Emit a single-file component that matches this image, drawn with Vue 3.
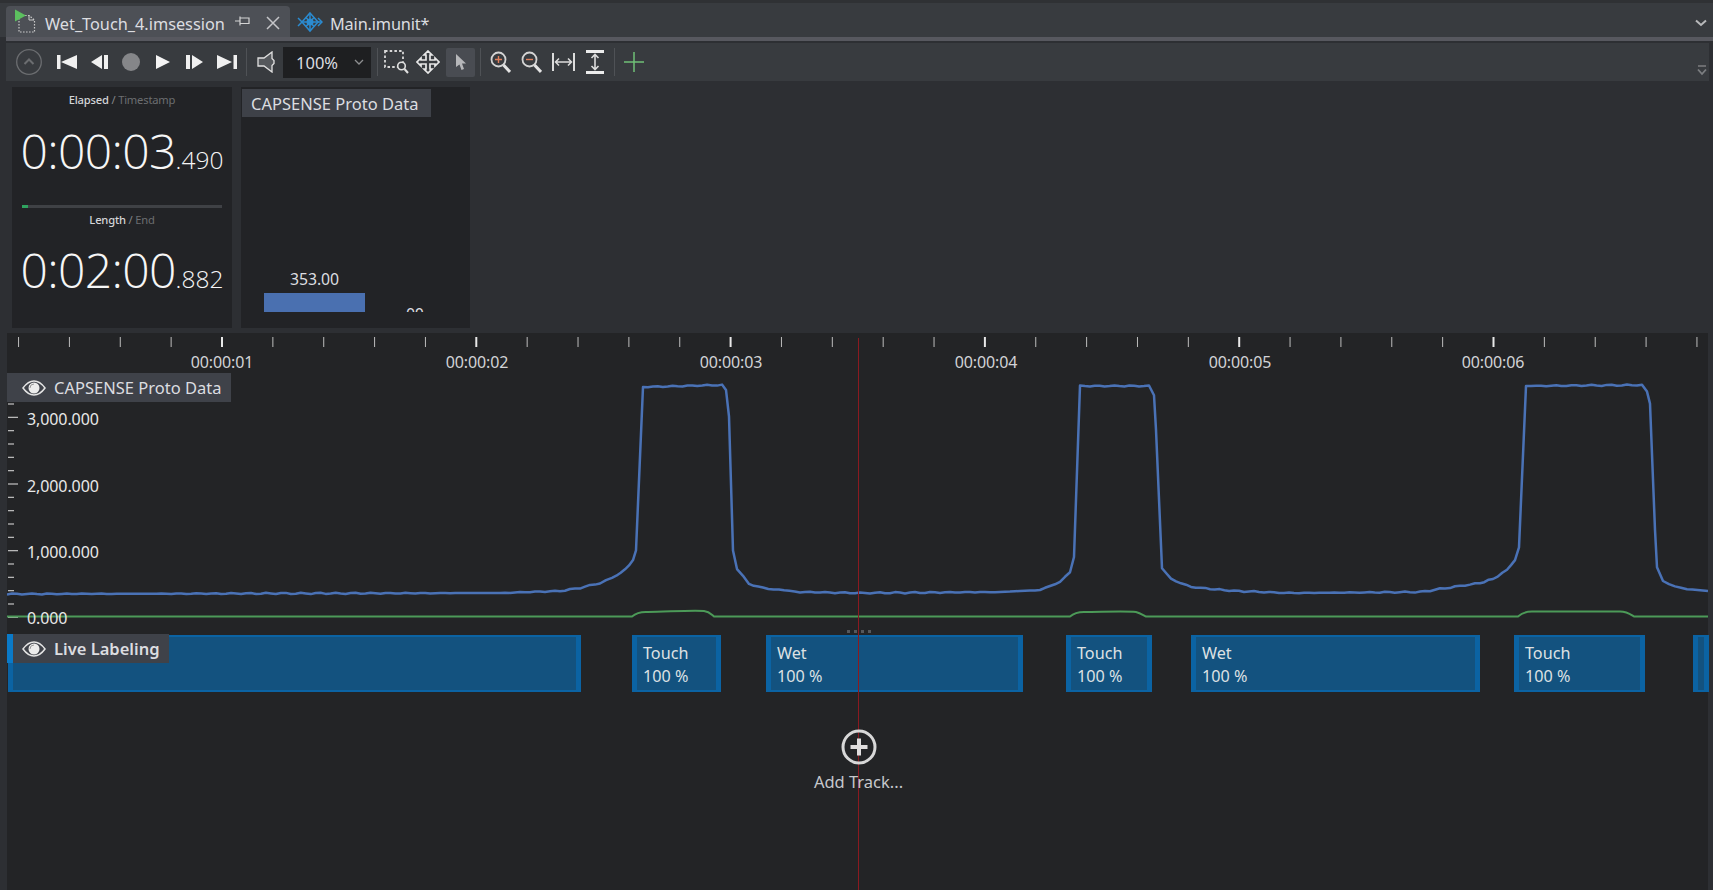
<script setup>
const ORIGIN_X = 7
const keyPoints = [
  [7, 594], [500, 593], [560, 591], [580, 588], [600, 583], [612, 578], [625, 570], [633, 560], [636, 550], [643, 387],
  [722, 385], [726, 390], [729, 417], [733, 550], [737, 569], [749, 584], [763, 588], [800, 592], [860, 593],
  [1000, 592], [1040, 590], [1060, 582], [1070, 572], [1074, 557], [1080, 386], [1149, 386], [1154, 395], [1156, 430],
  [1162, 568], [1171, 579], [1191, 587], [1234, 591], [1289, 593], [1420, 592], [1480, 583], [1493, 579], [1507, 570],
  [1515, 560], [1519, 547], [1526, 386], [1642, 385], [1647, 392], [1650, 403], [1655, 530], [1657, 567], [1663, 581],
  [1675, 587], [1687, 589], [1708, 591]
]

function jitter(x) {
  return (Math.sin(x * 0.37) + Math.sin(x * 0.91 + 1.3)) * 0.35
}

function buildBlue() {
  const pts = []
  for (let i = 0; i < keyPoints.length - 1; i++) {
    const [x0, y0] = keyPoints[i]
    const [x1, y1] = keyPoints[i + 1]
    const n = Math.max(1, Math.round((x1 - x0) / 5))
    for (let k = 0; k < n; k++) {
      const x = x0 + ((x1 - x0) * k) / n
      const y = y0 + ((y1 - y0) * k) / n
      pts.push(`${x.toFixed(1)},${(y + jitter(x)).toFixed(1)}`)
    }
  }
  pts.push('1708,591')
  return pts.join(' ')
}

const bluePoints = buildBlue()
const greenPath =
  'M7 616.5H632C636 613 640 611.5 648 612C665 612 690 610 704 611C709 611.500 711 614 714 616.500H1070C1074 613 1078 612 1084 612C1100 612 1125 611 1136 612C1140 613 1143 615 1146 616.500H1518C1522 613 1526 611.500 1532 611.500H1620C1627 611.500 1630 614 1634 616.500H1708'

const rulerTicks = Array.from({ length: 34 }, (_, k) => ({
  x: 222 + 50.86 * (k - 4),
  major: (k - 4) % 5 === 0
}))
const rulerLabels = [
  ['00:00:01', 222], ['00:00:02', 477], ['00:00:03', 731],
  ['00:00:04', 986], ['00:00:05', 1240], ['00:00:06', 1493]
]
const axisTicks = Array.from({ length: 17 }, (_, k) => ({
  y: 404 + k * 13.333,
  major: (k - 1) % 5 === 0
}))
const axisLabels = [['3,000.000', 420], ['2,000.000', 486.500], ['1,000.000', 552.500], ['0.000', 618.500]]

const blocks = [
  { x: 8, w: 573, lines: [] },
  { x: 632, w: 89, lines: ['Touch', '100 %'] },
  { x: 766, w: 257, lines: ['Wet', '100 %'] },
  { x: 1066, w: 86, lines: ['Touch', '100 %'] },
  { x: 1191, w: 289, lines: ['Wet', '100 %'] },
  { x: 1514, w: 131, lines: ['Touch', '100 %'] },
  { x: 1693, w: 15, lines: [] }
]
function blockStyle(b) {
  return { left: `${b.x - ORIGIN_X}px`, width: `${b.w}px` }
}
</script>

<template>
  <div class="app">
    <div class="tabstrip">
      <div class="tab active">
        <svg class="ico-session" viewBox="0 0 24 24" width="24" height="24">
          <path d="M6 6.500H16L21.500 11V23H6Z" fill="none" stroke="#c9c9c9" stroke-width="1.200" stroke-dasharray="1.600 1.400" />
          <path d="M16 6V11H21" fill="none" stroke="#c9c9c9" stroke-width="1" />
          <path d="M2 0.500L13 6.500L2 12.500Z" fill="#5cc05f" />
        </svg>
        <span class="tab-title">Wet_Touch_4.imsession</span>
        <svg class="ico-pin" viewBox="0 0 16 12" width="16" height="12">
          <path d="M0 6H5M5 1.500V10.500M5 3H14V8.500H5" fill="none" stroke="#d4d4d4" stroke-width="1.200" />
        </svg>
        <svg class="ico-close" viewBox="0 0 14 14" width="14" height="14">
          <path d="M1 1L13 13M13 1L1 13" stroke="#c4c5c8" stroke-width="1.500" />
        </svg>
      </div>
      <div class="tab">
        <svg class="ico-unit" viewBox="0 0 26 22" width="26" height="22">
          <g fill="none" stroke="#2b8bd0" stroke-width="1.500">
            <path d="M13 2L21 11L13 20L5 11Z" />
            <path d="M13 2V20M5 11H25M9 6.500L17 15.500M17 6.500L9 15.500" />
            <path d="M1 7L5 11L1 15" />
            <path d="M21 7L25 11L21 15" />
          </g>
          <circle cx="13" cy="11" r="3.500" fill="#2b8bd0" />
        </svg>
        <span class="tab-title">Main.imunit*</span>
      </div>
      <svg class="ico-overflow" viewBox="0 0 12 8" width="12" height="8">
        <path d="M1 1.500L6 6L11 1.500" fill="none" stroke="#b8b9bb" stroke-width="2" />
      </svg>
    </div>
    <div class="tabline"></div>

    <div class="toolbar">
      <svg class="tb t-circle" viewBox="0 0 26 26" width="26" height="26">
        <circle cx="13" cy="13" r="12.300" fill="none" stroke="#6b6d70" stroke-width="1.300" />
        <path d="M8.500 15L13 10.500L17.500 15" fill="none" stroke="#6b6d70" stroke-width="2" />
      </svg>
      <svg class="tb t-skipb" viewBox="0 0 20 16" width="20" height="16">
        <path d="M0 1H3.500V15H0ZM20 1V15L4 8Z" fill="#f0f0f0" />
      </svg>
      <svg class="tb t-stepb" viewBox="0 0 17 16" width="17" height="16">
        <path d="M11 1V15L0 8ZM13 1H17V15H13Z" fill="#f0f0f0" />
      </svg>
      <div class="t-stop"></div>
      <svg class="tb t-play" viewBox="0 0 14 16" width="14" height="16">
        <path d="M0 1L14 8L0 15Z" fill="#f4f4f4" />
      </svg>
      <svg class="tb t-stepf" viewBox="0 0 17 16" width="17" height="16">
        <path d="M0 1H4V15H0ZM6 1L17 8L6 15Z" fill="#f0f0f0" />
      </svg>
      <svg class="tb t-skipf" viewBox="0 0 20 16" width="20" height="16">
        <path d="M0 1L15 8L0 15ZM16.500 1H20V15H16.500Z" fill="#f0f0f0" />
      </svg>
      <div class="sep s1"></div>
      <svg class="tb t-speaker" viewBox="0 0 18 22" width="18" height="22">
        <path d="M1 7H7L15 1V7.500L17 9.500V12.500L15 14.500V21L7 15H1Z" fill="#55585c" stroke="#e0e0e0" stroke-width="1.300" />
      </svg>
      <div class="zoombox">
        <span>100%</span>
        <svg viewBox="0 0 10 6" width="10" height="6">
          <path d="M1 1L5 5L9 1" fill="none" stroke="#8d8e90" stroke-width="1.300" />
        </svg>
      </div>
      <div class="sep s2"></div>
      <svg class="tb t-select" viewBox="0 0 25 24" width="25" height="24">
        <rect x="1" y="1" width="18" height="16" fill="none" stroke="#d8d8d8" stroke-width="1.800" stroke-dasharray="2.500 2.200" />
        <circle cx="17.500" cy="16" r="3.800" fill="#383b3f" stroke="#e0e0e0" stroke-width="1.600" />
        <path d="M20.500 19L24 23" stroke="#e0e0e0" stroke-width="2" />
      </svg>
      <svg class="tb t-move" viewBox="0 0 24 24" width="24" height="24">
        <path d="M12 1L16 5H14V10H19V8L23 12L19 16V14H14V19H16L12 23L8 19H10V14H5V16L1 12L5 8V10H10V5H8Z" fill="none" stroke="#e8e8e8" stroke-width="1.700" />
      </svg>
      <div class="t-pointer">
        <svg viewBox="0 0 12 18" width="12" height="18">
          <path d="M1 1L11 10.500H7L9 16L6.500 17L4.500 11.500L1 14Z" fill="#b6b7ba" />
        </svg>
      </div>
      <div class="sep s3"></div>
      <svg class="tb t-zin" viewBox="0 0 21 23" width="21" height="23">
        <circle cx="8.500" cy="8.500" r="7" fill="none" stroke="#d4d4d4" stroke-width="1.800" />
        <path d="M13.500 14L20 21" stroke="#e4e4e4" stroke-width="3" />
        <path d="M5 8.500H12M8.500 5V12" stroke="#e0805e" stroke-width="1.400" />
      </svg>
      <svg class="tb t-zout" viewBox="0 0 21 23" width="21" height="23">
        <circle cx="8.500" cy="8.500" r="7" fill="none" stroke="#d4d4d4" stroke-width="1.800" />
        <path d="M13.500 14L20 21" stroke="#e4e4e4" stroke-width="3" />
        <path d="M5 8.500H12" stroke="#e0805e" stroke-width="1.400" />
      </svg>
      <svg class="tb t-fitw" viewBox="0 0 23 20" width="23" height="20">
        <path d="M1 1V19M22 1V19" stroke="#dcdcdc" stroke-width="2" />
        <path d="M3 10H20M7 6.500L3.500 10L7 13.500M16 6.500L19.500 10L16 13.500" fill="none" stroke="#dcdcdc" stroke-width="1.500" />
      </svg>
      <svg class="tb t-fith" viewBox="0 0 18 24" width="18" height="24">
        <path d="M0 1.500H18M0 22.500H18" stroke="#ececec" stroke-width="3" />
        <path d="M9 4V20M5.500 8L9 4.500L12.500 8M5.500 16L9 19.500L12.500 16" fill="none" stroke="#dcdcdc" stroke-width="1.600" />
      </svg>
      <div class="sep s4"></div>
      <svg class="tb t-plus" viewBox="0 0 20 20" width="20" height="20">
        <path d="M0 10H20M10 0V20" stroke="#6fc077" stroke-width="1.500" />
      </svg>
      <svg class="t-more" viewBox="0 0 10 11" width="10" height="11">
        <path d="M1 1H9" stroke="#7c7e81" stroke-width="1.500" />
        <path d="M1 4.500L5 9L9 4.500" fill="none" stroke="#7c7e81" stroke-width="1.800" />
      </svg>
    </div>

    <div class="panels">
      <div class="card timecard">
        <div class="caption cap-a"><b>Elapsed</b> / <i>Timestamp</i></div>
        <div class="clock clock-a">0:00:03<small>.490</small></div>
        <div class="progress"><div class="progress-fill"></div></div>
        <div class="caption cap-b"><b>Length</b> / <i>End</i></div>
        <div class="clock clock-b">0:02:00<small>.882</small></div>
      </div>
      <div class="card datacard">
        <div class="data-head">CAPSENSE Proto Data</div>
        <div class="bars">
          <div class="bar-col">
            <span class="bar-value">353.00</span>
            <div class="bar"></div>
          </div>
          <span class="bar-clip"><span>00</span></span>
        </div>
      </div>
    </div>

    <div class="timeline">
      <svg class="ruler" viewBox="7 333 1701 40" width="1701" height="40">
        <line v-for="t in rulerTicks" :key="t.x" :x1="t.x" :x2="t.x" y1="337" y2="347"
          :stroke="t.major ? '#e8e8e8' : '#bdbdbd'" :stroke-width="t.major ? 2 : 1" />
        <text v-for="l in rulerLabels" :key="l[0]" class="ruler-text" :x="l[1]" y="368" text-anchor="middle">{{ l[0] }}</text>
      </svg>

      <div class="chart">
        <svg viewBox="7 373 1701 255" width="1701" height="255">
          <line v-for="t in axisTicks" :key="t.y" x1="8" :x2="t.major ? 18 : 14" :y1="t.y" :y2="t.y"
            stroke="#c4c4c4" stroke-width="1.200" />
          <polyline :points="bluePoints" fill="none" stroke="#4a72b6" stroke-width="2.500" stroke-linejoin="round" />
          <path :d="greenPath" fill="none" stroke="#4c9a58" stroke-width="2" />
          <text v-for="l in axisLabels" :key="l[0]" class="axis-text" x="27" :y="l[1] + 5">{{ l[0] }}</text>
        </svg>
        <div class="track-label chart-label">
          <svg class="eye" viewBox="0 0 24 16" width="24" height="16">
            <path d="M1 8C5 2.500 9 1 12 1S19 2.500 23 8C19 13.500 15 15 12 15S5 13.500 1 8Z" fill="none" stroke="#e4e4e4" stroke-width="1.500" />
            <circle cx="12" cy="8" r="5.500" fill="#ececec" />
            <path d="M8 8A4 4 0 0 1 12 4" fill="none" stroke="#9a9a9a" stroke-width="1" />
          </svg>
          <span>CAPSENSE Proto Data</span>
        </div>
      </div>

      <div class="splitter"><i></i><i></i><i></i><i></i></div>

      <div class="lane">
        <div v-for="b in blocks" :key="b.x" class="block" :style="blockStyle(b)">
          <span v-for="line in b.lines" :key="line">{{ line }}</span>
        </div>
        <div class="track-label lane-label">
          <svg class="eye" viewBox="0 0 24 16" width="24" height="16">
            <path d="M1 8C5 2.500 9 1 12 1S19 2.500 23 8C19 13.500 15 15 12 15S5 13.500 1 8Z" fill="none" stroke="#e4e4e4" stroke-width="1.500" />
            <circle cx="12" cy="8" r="5.500" fill="#ececec" />
            <path d="M8 8A4 4 0 0 1 12 4" fill="none" stroke="#9a9a9a" stroke-width="1" />
          </svg>
          <span>Live Labeling</span>
        </div>
      </div>

      <div class="add-track">
        <svg viewBox="0 0 36 36" width="36" height="36">
          <circle cx="18" cy="18" r="16" fill="none" stroke="#d8d8d8" stroke-width="3" />
          <path d="M18 9.500V26.500M9.500 18H26.500" stroke="#e0dede" stroke-width="4" />
        </svg>
        <span>Add Track...</span>
      </div>

      <div class="playhead"></div>
    </div>
  </div>
</template>

<style scoped>
.app {
  position: relative;
  width: 1713px;
  height: 890px;
  overflow: hidden;
  display: flex;
  flex-direction: column;
  background: #2d2f33;
  color: #dcdde0;
  font-family: "Noto Sans", "Open Sans", sans-serif;
}
.tabstrip {
  height: 37px;
  padding: 3px 0 0 6px;
  box-sizing: border-box;
  display: flex;
  align-items: stretch;
  flex: none;
  background: #383b3f;
  border-top: 3px solid #2f3134;
}
.tab {
  display: flex;
  align-items: center;
  font-size: 16.300px;
  padding-top: 4px;
  box-sizing: border-box;
}
.tab.active {
  width: 284px;
  background: #4d5056;
  border-radius: 4px 4px 0 0;
}
.ico-session {
  margin-left: 7px;
  margin-top: -5px;
}
.active .tab-title {
  margin-left: 8px;
}
.ico-pin {
  margin-left: 10px;
  margin-top: -5px;
}
.ico-close {
  margin-left: 15px;
  margin-top: -1px;
}
.ico-unit {
  margin-left: 7px;
  margin-top: -4px;
}
.tab:not(.active) .tab-title {
  margin-left: 7px;
  letter-spacing: -0.15px;
}
.ico-overflow {
  margin: 13px 6px 0 auto;
}
.tabline {
  height: 4px;
  flex: none;
  margin-left: 6px;
  background: #57585f;
}
.toolbar {
  height: 38px;
  flex: none;
  margin: 2px 4px 0 6px;
  display: flex;
  align-items: center;
  background: #383b3f;
  position: relative;
}
.tb {
  flex: none;
}
.t-circle { margin-left: 10px; }
.t-skipb { margin-left: 15px; }
.t-stepb { margin-left: 14px; }
.t-stop {
  width: 18px;
  height: 18px;
  margin-left: 14px;
  border-radius: 50%;
  background: #858689;
  flex: none;
}
.t-play { margin-left: 16px; }
.t-stepf { margin-left: 16px; }
.t-skipf { margin-left: 14px; }
.sep {
  width: 1px;
  height: 28px;
  background: #4f5256;
  flex: none;
}
.s1 { margin-left: 9px; }
.t-speaker { margin-left: 10px; }
.zoombox {
  width: 88px;
  height: 31px;
  margin-left: 8px;
  box-sizing: border-box;
  padding: 0 7px 0 13px;
  display: flex;
  align-items: center;
  justify-content: space-between;
  background: #1e1f21;
  font-size: 16.500px;
  flex: none;
}
.s2 { margin-left: 6px; }
.t-select { margin-left: 6px; }
.t-move { margin-left: 7px; }
.t-pointer {
  width: 29px;
  height: 29px;
  margin-left: 6px;
  background: #494c52;
  border-radius: 2px;
  display: flex;
  align-items: center;
  justify-content: center;
  flex: none;
}
.s3 { margin-left: 5px; }
.t-zin { margin-left: 9px; }
.t-zout { margin-left: 10px; }
.t-fitw { margin-left: 10px; }
.t-fith { margin-left: 11px; }
.s4 { margin-left: 10px; }
.t-plus { margin-left: 9px; }
.t-more {
  position: absolute;
  right: 2px;
  bottom: 5px;
}
.panels {
  height: 252px;
  flex: none;
  box-sizing: border-box;
  padding: 6px 0 4px 12px;
  display: flex;
  gap: 9px;
}
.card {
  background: #222326;
  height: 241px;
  flex: none;
}
.timecard {
  width: 220px;
  display: flex;
  flex-direction: column;
  align-items: center;
  box-sizing: border-box;
  padding-top: 6px;
}
.caption {
  font-size: 11.200px;
  line-height: 14px;
  color: #85878a;
  letter-spacing: -0.2px;
}
.caption b {
  color: #d4d5d8;
  font-weight: 500;
}
.caption i {
  color: #6c6e71;
  font-style: normal;
}
.clock {
  font-family: "Open Sans", sans-serif;
  font-weight: 300;
  font-size: 48px;
  line-height: 60px;
  color: #f6f6f6;
  letter-spacing: -0.700px;
  white-space: nowrap;
}
.clock small {
  font-size: 24.500px;
  font-weight: 300;
  letter-spacing: 0;
}
.clock-a { margin-top: 14px; }
.clock-b { margin-top: 13px; }
.progress {
  width: 200px;
  height: 3px;
  margin-top: 15px;
  background: #3f4145;
}
.progress-fill {
  width: 6px;
  height: 3px;
  background: #2fa35f;
}
.cap-b { margin-top: 5px; }
.datacard {
  width: 229px;
  display: flex;
  flex-direction: column;
}
.data-head {
  width: 189px;
  height: 28px;
  margin: 2px 0 0 1px;
  padding: 1px 0 0 9px;
  box-sizing: border-box;
  background: #3e4148;
  font-size: 16.500px;
  line-height: 28px;
}
.bars {
  flex: 1;
  display: flex;
  align-items: flex-end;
  padding: 0 0 16px 23px;
}
.bar-col {
  width: 101px;
  display: flex;
  flex-direction: column;
  align-items: center;
}
.bar-value {
  font-size: 15.800px;
  line-height: 20px;
  letter-spacing: -0.1px;
  margin-bottom: 4px;
}
.bar {
  width: 101px;
  height: 19px;
  background: #4a70b0;
}
.bar-clip {
  width: 22px;
  height: 7px;
  margin-left: 41px;
  overflow: hidden;
  font-size: 16px;
  line-height: 18px;
  display: block;
}
.bar-clip span {
  display: block;
  letter-spacing: -0.3px;
}
.timeline {
  position: relative;
  flex: 1;
  width: 1701px;
  margin-left: 7px;
  background: #232426;
  display: flex;
  flex-direction: column;
  align-items: stretch;
}
.ruler {
  display: block;
  flex: none;
}
.ruler-text {
  font-size: 16px;
  fill: #d2d3d6;
  letter-spacing: -0.1px;
}
.chart {
  position: relative;
  height: 255px;
  flex: none;
}
.chart > svg {
  display: block;
}
.axis-text {
  font-size: 16px;
  fill: #e8e8e8;
  letter-spacing: -0.1px;
}
.track-label {
  position: absolute;
  top: 0;
  left: 0;
  height: 29px;
  display: flex;
  align-items: center;
  background: #3f4249;
  font-size: 16.500px;
  box-sizing: border-box;
}
.chart-label {
  width: 224px;
  padding-left: 15px;
}
.lane-label {
  top: -1px;
  width: 162px;
  padding-left: 9px;
  border-left: 6px solid #0a7ac8;
  font-weight: 600;
}
.eye {
  margin-right: 8px;
  flex: none;
}
.splitter {
  height: 7px;
  flex: none;
  display: flex;
  justify-content: center;
  align-items: center;
  gap: 4px;
  margin-left: 2px;
}
.splitter i {
  width: 3px;
  height: 3px;
  background: #55575b;
}
.lane {
  position: relative;
  height: 57px;
  flex: none;
}
.block {
  position: absolute;
  top: 0;
  height: 57px;
  box-sizing: border-box;
  padding: 5px 0 0 6px;
  border: solid #0b63a3;
  border-width: 2px 5px;
  background: #13527f;
  display: flex;
  flex-direction: column;
  font-size: 16.200px;
  line-height: 23px;
  color: #dde1e4;
  overflow: hidden;
  white-space: nowrap;
}
.add-track {
  margin-top: 37px;
  display: flex;
  flex-direction: column;
  align-items: center;
  gap: 7px;
  color: #c6c8cc;
  font-size: 16.500px;
  line-height: 20px;
  padding-left: 2px;
  position: relative;
  z-index: 2;
}
.add-track svg {
  display: block;
}
.playhead {
  position: absolute;
  top: 5px;
  bottom: 0;
  left: 851px;
  width: 1px;
  background: #8a1a20;
  z-index: 1;
}
</style>

<style>
html, body {
  margin: 0;
  background: #2d2f33;
}
</style>
